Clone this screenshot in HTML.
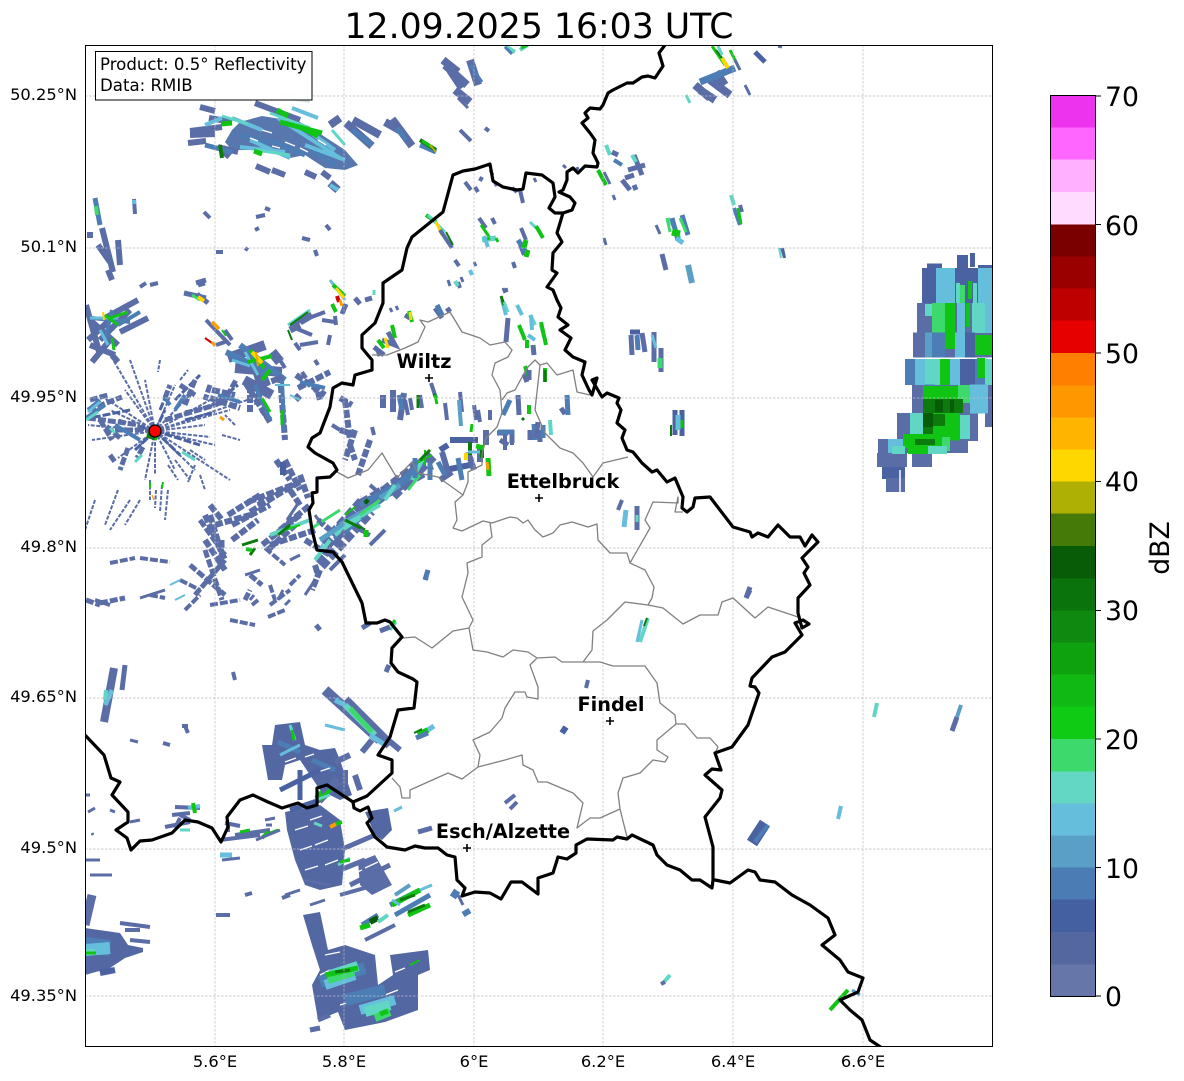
<!DOCTYPE html>
<html><head><meta charset="utf-8"><title>Radar</title>
<style>
html,body{margin:0;padding:0;background:#fff}
svg{display:block;font-family:"DejaVu Sans","Liberation Sans",sans-serif}
.e{fill:none;stroke-linecap:butt}
.b{stroke:#5a6da6}.n{stroke:#4a62a2}.m{stroke:#4c7db5}.s{stroke:#5a9fc6}.l{stroke:#65bedc}.t{stroke:#62d6c4}.g{stroke:#3ed96c}.G{stroke:#10c414}.D{stroke:#0c7a0c}.k{stroke:#085c08}.y{stroke:#ffd700}.o{stroke:#ff9c00}.r{stroke:#d40000}.q{stroke:#aeb004}
.w2{stroke-width:2}.w3{stroke-width:3}.w4{stroke-width:4}.w5{stroke-width:5}.w6{stroke-width:6}.w7{stroke-width:7}.w8{stroke-width:8}.w10{stroke-width:10}.w1{stroke-width:1.3}
.d1{stroke-dasharray:4 1.5}.d2{stroke-dasharray:8 2}
</style></head><body>
<svg width="1184" height="1081" viewBox="0 0 1184 1081" xmlns="http://www.w3.org/2000/svg">
<rect width="1184" height="1081" fill="#fff"/>
<defs><clipPath id="ax"><rect x="85" y="45" width="907" height="1001"/></clipPath></defs>
<g clip-path="url(#ax)">

<!-- top-left cluster -->
<path fill="#5877ae" d="M240 122L262 116L300 122L322 135L345 150L358 165L345 170L325 168L305 155L290 158L270 152L250 150L232 150L225 142L232 130Z"/>
<path class="e b w6" d="M200 107L215 111M209 118L232 122M190 131L222 127M188 143L206 141M190 135L215 134M218 147L238 152M256 166L270 172M272 170L285 175M305 172L316 177M322 172L330 178M255 103L300 120"/>
<path class="e b w8" d="M224 151L230 156M330 125L340 118M346 123L372 146M353 120L380 135M392 119L412 146M385 122L401 131M330 183L338 190"/>
<path class="e m w5" d="M205 145L232 152M240 135L268 143M270 140L305 155M312 150L335 165M352 130L372 145M397 128L406 140M420 145L436 152"/>
<path class="e l w4" d="M205 125L222 118M232 118L262 130M278 118L340 158M250 140L290 158M300 125L335 150M240 147L285 152M305 145L345 160M292 108L318 118M330 185L338 190"/>
<path class="e t w3" d="M222 116L248 124M270 113L310 128M256 150L290 155M332 130L345 145"/>
<path class="e G w5" d="M221 124L232 123M280 122L322 133M254 151L262 154M277 110L288 116M302 128L318 136"/>
<path class="e D w4" d="M220 145L222 158M420 140L436 150"/>
<path class="e G w3" d="M422 141L432 147"/>
<path class="e q w2" d="M430 145L436 152"/>
<path stroke="#fff" stroke-width="1.4" fill="none" d="M262 130L272 133M285 142L295 146M300 148L308 152M250 138L258 141M318 140L326 145M272 146L280 148"/>
<path class="e" stroke="#d6e3e6" stroke-width="6" d="M278 95L310 100"/>
<!-- blue scatter upper -->
<path class="e b w4" d="M134 199L135 214M204 212L210 218M256 217L265 215M255 230L259 228M265 208L270 210M302 238L310 240M315 250L317 256M216 252L223 252M245 248L248 250M471 141L460 130M485 128L489 131M326 225L330 230"/>
<path class="e l w4" d="M134 200L134 204"/>

<!-- left edge column -->
<path class="e m w5" d="M95 198L100 225"/>
<path class="e g w4" d="M96 206L97 215"/>
<path class="e b w6" d="M102 228L113 272M118 240L120 265M98 245L110 262M108 270L112 280M90 232L90 238"/>
<!-- cluster B -->
<path class="e b w6" d="M86 305L100 355M90 320L118 345M88 340L112 318M112 355L118 362M105 318L138 300M120 332L148 318M92 362L110 340M100 340L130 310M90 345L115 355"/>
<path class="e m w4" d="M92 318L130 322M105 340L112 310M118 325L140 312"/>
<path class="e l w3" d="M90 318L118 318M100 330L108 345"/>
<path class="e G w3" d="M110 318L128 312M105 315L118 325M112 338L114 350"/>
<path class="e y w2" d="M103 312L104 320"/>
<path class="e b w4" d="M140 287L146 283M158 283L150 285"/>

<!-- small orange clusters -->
<path class="e b w5" d="M184 293L206 298M198 285L205 283M196 283L206 280M197 294L208 303"/>
<path class="e g w3" d="M192 295L200 300"/>
<path class="e y w4" d="M198 297L204 301"/>
<path class="e b w4" d="M206 320L230 345M216 345L225 342M225 330L232 340"/>
<path class="e o w4" d="M212 322L219 329"/>
<path class="e r w2" d="M205 338L212 343"/>
<path class="e o w3" d="M212 342L215 346"/>
<path class="e G w2" d="M222 330L226 336"/>
<!-- bright cluster -->
<path class="e b w10" d="M228 358L265 345M235 368L282 372M250 350L262 385M244 380L272 395M272 352L280 362"/>
<path class="e b w7" d="M300 322L312 315M300 325L290 330"/>
<path class="e m w6" d="M240 345L285 380M226 352L268 372M258 360L268 385"/>
<path class="e l w3" d="M245 352L258 375M232 360L250 366"/>
<path class="e G w4" d="M250 350L264 368M248 362L272 356M270 370L262 380"/>
<path class="e y w4" d="M252 352L262 363"/>
<path class="e o w2" d="M256 352L258 366"/>
<path class="e b w4" d="M290 325L325 312M295 328L312 335M300 345L318 342M292 322L292 330M330 335L328 345M322 320L335 322M295 343L300 350M315 360L318 365M260 382L256 405M280 360L285 368M335 316L336 325M302 372L306 378M312 384L316 392"/>
<path class="e t w3" d="M288 325L310 310"/>
<path class="e D w2" d="M290 325L308 312M288 330L292 340"/>
<!-- cluster G -->
<path class="e l w3" d="M330 280L345 300"/>
<path class="e G w4" d="M333 285L345 296M332 304L336 312"/>
<path class="e y w3" d="M336 288L344 298"/>
<path class="e r w4" d="M337 296L339 302"/>
<path class="e o w3" d="M340 300L342 306"/>
<path class="e b w5" d="M346 304L342 314M355 298L360 304M365 300L372 298"/>
<path class="e t w3" d="M374 290L374 295"/>
<path class="e b w3" d="M390 308L392 312M396 306L398 310"/>
<!-- Wiltz vicinity -->
<path class="e b w5" d="M382 340L395 345L388 332M374 347L384 355M405 315L410 318M378 350L380 356"/>
<path class="e G w4" d="M378 340L384 348M392 325L395 338M409 311L412 322"/>
<path class="e y w3" d="M385 338L388 348M410 312L411 320"/>
<path class="e b w5" d="M435 308L442 318M447 308L450 312"/>
<path class="e m w5" d="M437 305L442 315"/>

<!-- radar site star -->
<path class="e b w2 d1" d="M155 431L112 358M155 431L130 360M155 431L145 380M155 431L175 385M155 431L190 395M155 431L210 400M155 431L262 395M155 431L230 410M155 431L205 425M155 431L210 437M155 431L215 445M155 431L195 470M155 431L230 480M155 431L175 470M155 431L145 480M155 431L118 458M155 431L92 440M155 431L88 425M155 431L100 395M155 431L125 390M155 431L110 410M155 431L155 475M155 431L135 450M160 360L158 372M190 450L205 460M180 380L188 370"/>
<path class="e n w3 d2" d="M155 431L118 420M155 431L200 445M155 431L165 410M155 431L135 450M155 431L180 455M130 410L90 418M175 400L200 375M185 412L225 403M185 420L215 412M212 405L238 385M160 410L165 398"/>
<path class="e b w5 d2" d="M88 410L122 397M100 420L112 440M90 400L108 395M180 385L195 395M165 398L170 385M195 380L185 405M210 385L205 400M222 405L236 380M128 448L120 470M110 455L115 462M120 438L105 425M143 447L137 458M88 418L140 425M165 420L215 405M115 430L150 430"/>
<path class="e m w4" d="M86 418L105 405M100 400L88 410M165 398L170 405M140 440L115 425M185 395L175 410"/>
<path class="e t w3" d="M86 420L98 412M182 452L195 460M142 455L135 462M115 433L110 428"/>
<path class="e l w3" d="M88 412L100 402"/>
<path class="e G w6" d="M148 432L158 438"/>
<path class="e D w5" d="M147 435L155 438"/>
<path class="e b w2 d1" d="M175 460L190 480M168 465L178 480M195 465L188 482M200 475L205 490M150 480L150 500M156 490L155 508M162 485L160 512M168 490L165 520M140 500L125 525M118 490L105 525M130 500L110 530M95 500L85 530M222 435L240 440M235 425L225 415"/>
<path class="e G w2" d="M150 482L150 488M163 482L162 488"/>
<path class="e o w1" d="M152 495L154 500"/>
<circle cx="155" cy="431" r="6" fill="#ff0000" stroke="#000" stroke-width="1.2"/>

<!-- branches right of bright cluster -->
<path class="e b w6 d2" d="M212 390L235 395M210 398L240 408M215 405L232 392M245 382L270 422M250 385L250 412M280 375L285 440M262 410L270 420M296 375L325 395M298 388L330 372M318 392L320 400M300 400L295 395M340 398L352 405M345 400L350 440M340 430L355 435M350 445L355 460M262 385L280 378"/>
<path class="e m w4" d="M218 395L240 402M255 385L270 420M282 380L284 430M300 382L325 388"/>
<path class="e l w2" d="M275 385L290 385M290 395L300 400"/>
<path class="e G w3" d="M282 410L282 425M262 398L270 412"/>
<path class="e o w3" d="M220 417L224 420"/>
<!-- right side scatter -->
<path class="e b w6" d="M393 390L393 412M404 393L400 420M383 395L383 408"/>
<path class="e m w5" d="M399 395L402 410"/>
<path class="e b w4" d="M410 398L412 410M420 395L422 408M431 383L436 398M445 403L447 420M460 392L462 412M474 405L476 420M478 410L480 422M490 410L490 420M505 435L505 450M512 432L512 445"/>
<path class="e s w4" d="M459 400L461 426"/>
<path class="e D w3" d="M418 395L418 408M436 398L434 394"/>
<path class="e G w3" d="M435 395L437 404M472 424L471 432"/>
<path class="e b w4" d="M332 425L340 430M372 427L374 435M405 400L408 415"/>
<!-- Band -->
<path class="e b" stroke-width="13" stroke-dasharray="9 3" d="M320 565L370 510M325 545L365 500M362 505L425 470M340 530L385 490M375 500L420 465M392 495L432 455"/>
<path class="e b w6 d2" d="M276 460L290 480M285 460L300 490M300 475L308 498M318 520L330 530M290 490L300 505M248 502L300 482M250 512L285 490M300 482L258 505M210 505L222 520M228 515L260 495M232 525L270 505M215 525L250 515M232 540L258 520M300 515L262 545M268 550L295 525M280 530L310 505M205 515L225 560M210 515L222 555M205 540L225 570M270 545L315 530M305 540L330 555M315 565L318 575M355 430L345 460M370 440L358 475M320 570L312 590"/>
<path class="e n w6" d="M283 462L283 475M450 440L478 440M445 470L470 465M440 450L448 445"/>
<path class="e m w6" d="M335 540L380 500M360 505L410 478M395 488L425 460"/>
<path class="e s w5" d="M340 525L375 505M380 498L400 485M320 540L350 520"/>
<path class="e t w4" d="M345 525L380 505M385 500L395 485M412 480L425 455M335 535L360 518M270 535L310 520M315 560L330 540"/>
<path class="e g w3" d="M360 515L380 500M408 490L420 475M312 528L340 510"/>
<path class="e G w2" d="M355 507L345 515M413 465L432 455M425 450L425 465M285 530L300 525"/>
<path class="e D w3" d="M345 520L365 530M420 460L430 450M278 535L290 525M250 555L255 548M242 545L258 540"/>
<path class="e G w4" d="M246 549L252 550"/>
<path class="e b w4" d="M428 458L432 470M370 485L378 492M370 545L385 530M360 530L370 535M335 545L345 530M345 555L330 570"/>
<path class="e k w5" d="M365 500L368 503"/>
<path class="e G w5" d="M366 537L366 530"/>
<!-- near Ettelbruck -->
<path class="e b w6" d="M442 452L448 472M468 452L474 470M480 445L480 462M452 472L440 480M486 430L486 445"/>
<path class="e m w5" d="M415 458L415 478M430 463L430 480M438 462L445 475M458 458L462 480"/>
<path class="e D w4" d="M470 442L470 455M482 445L482 458"/>
<path class="e G w5" d="M488 458L489 476M476 446L484 448"/>
<path class="e o w3" d="M487 462L488 470"/>
<path class="e y w4" d="M466 453L466 460"/>
<path class="e l w3" d="M468 452L480 452"/>
<path class="e b w5" d="M500 440L508 445M497 433L508 433M512 430L512 443"/>
<path class="e b w5" d="M540 430L540 442M506 342L508 318M524 374L527 382M561 408L565 414"/>
<path class="e m w5" d="M503 415L510 400M498 432L514 432M534 424L535 440M567 395L568 415M543 425L543 438"/>
<path class="e G w4" d="M545 368L545 382M527 340L527 348M529 405L529 414M525 366L528 376"/>
<path class="e D w3" d="M545 370L545 382M522 420L524 418"/>
<path class="e t w4" d="M530 315L535 325M541 325L545 340M550 420L551 435"/>
<path class="e b w5" d="M533 345L534 355M529 370L529 380M518 395L519 415M530 430L530 440M538 422L536 438"/>
<path class="e G w4" d="M519 325L525 340M541 322L546 345"/>
<path class="e l w4" d="M502 300L506 315M517 305L522 315M528 335L535 340M531 315L532 330"/>
<path class="e b w5" d="M631 335L632 355M642 333L645 352M654 332L654 362M661 348L661 372"/>
<path class="e m w5" d="M637 335L638 350"/>
<path class="e l w3" d="M652 335L656 348"/>
<path class="e g w5" d="M660 358L660 368"/>
<path class="e n w5" d="M630 332L640 332M675 410L675 435M682 410L682 436"/>
<path class="e l w5" d="M678 415L678 430"/>
<path class="e G w3" d="M682 420L682 428"/>
<path class="e D w2" d="M671 425L671 436"/>
<path class="e l w5" d="M626 510L624 527"/>
<path class="e b w5" d="M637 506L637 530"/>
<path class="e t w3" d="M637 515L637 522"/>
<path class="e b w5" d="M428 570L425 580M750 590L746 598"/>
<path class="e m w4" d="M428 570L426 580"/>
<!-- Lower-left low returns -->
<path class="e b w4 d2" d="M140 558L170 562M110 563L135 558M95 600L110 605M150 595L165 598M180 580L200 590M185 610L200 595M210 605L240 600M230 620L255 625M270 605L290 590M268 617L285 610M290 585L300 575M270 585L275 600M265 548L285 565"/>
<path class="e b w5 d2" d="M86 600L100 605M100 603L125 598M190 565L225 595M195 595L225 560M218 560L225 570M205 550L222 600M222 540L222 570M200 520L225 555M245 600L250 590M250 575L262 585"/>
<path class="e b w3" d="M290 560L300 555M305 595L315 580M287 520L297 505M315 515L322 525M285 605L290 600M278 600L283 590M254 595L250 600M245 575L260 570M140 598L165 590"/>
<path class="e l w2" d="M185 595L175 600M170 585L180 580M323 543L320 550"/>
<!-- Upper-center scattered echoes -->
<path class="e b w8" d="M470 60L478 85M445 65L467 85M462 88L450 70M455 90L470 102M443 60L458 72"/>
<path class="e m w3" d="M470 65L482 82"/>
<path class="e b w3" d="M458 98L468 108M486 128L488 131M490 170L493 175"/>
<path class="e b w4" d="M465 182L471 190M482 177L480 181M475 187L478 192M520 190L523 203M495 182L497 186M517 192L512 188"/>
<path class="e t w4" d="M505 46L515 52M530 43L520 50"/>
<path class="e G w3" d="M521 48L530 44"/>
<path class="e m w3" d="M505 47L512 54"/>
<path class="e G w4" d="M426 215L436 222"/>
<path class="e t w3" d="M428 215L445 232"/>
<path class="e y w3" d="M436 222L442 235"/>
<path class="e b w4" d="M440 230L452 248M455 260L459 266M458 282L460 288"/>
<path class="e D w2" d="M446 232L453 245"/>
<path class="e l w4" d="M470 270L472 275"/>
<path class="e b w3" d="M448 280L450 286M461 277L463 282"/>
<path class="e t w4" d="M455 281L458 286"/>
<path class="e b w4" d="M479 218L486 228M492 218L495 224"/>
<path class="e G w3" d="M481 225L490 238"/>
<path class="e t w5" d="M482 240L496 238"/>
<path class="e G w3" d="M485 240L490 238M496 238L498 242"/>
<path class="e l w4" d="M488 247L484 236"/>
<path class="e b w4" d="M521 228L526 240M520 245L524 255M513 262L515 268"/>
<path class="e m w5" d="M518 240L526 252"/>
<path class="e G w5" d="M526 240L524 248M528 250L526 257"/>
<path class="e t w3" d="M530 222L536 228"/>
<path class="e G w4" d="M536 226L543 238"/>
<path class="e b w3" d="M503 288L505 293M506 288L507 292"/>
<path class="e D w3" d="M501 296L504 305"/>
<path class="e t w3" d="M504 302L508 312"/>
<path class="e b w3" d="M474 262L476 266"/>
<!-- upper right of border -->
<path class="e t w4" d="M606 145L610 155"/>
<path class="e b w5" d="M612 152L618 155M634 155L642 175M628 170L645 165M622 180L630 190M625 178L634 175M634 185L636 190"/>
<path class="e m w4" d="M614 160L622 165"/>
<path class="e G w4" d="M598 170L606 185"/>
<path class="e b w3" d="M604 172L610 184M613 195L615 200M563 165L566 168M577 167L578 170M534 178L536 182"/>
<path class="e t w4" d="M632 155L636 162"/>
<path class="e t w3" d="M686 95L690 103"/>
<path class="e b w8" d="M695 85L710 98M710 80L730 95M716 72L725 85M700 90L715 100"/>
<path class="e m w7" d="M700 82L735 68"/>
<path class="e n w5" d="M755 52L765 62"/>
<path class="e b w3" d="M745 85L750 95M778 46L782 47"/>
<path class="e G w3" d="M712 46L725 65M730 50L740 70"/>
<path class="e D w2" d="M716 50L725 62"/>
<path class="e y w4" d="M722 58L728 68"/>
<path class="e t w3" d="M718 46L722 55"/>
<path class="e b w3" d="M735 60L740 70"/>
<!-- 6.3E -->
<path class="e b w3" d="M656 225L660 234"/>
<path class="e t w3" d="M668 218L680 238"/>
<path class="e m w5" d="M672 218L678 240M682 215L688 235"/>
<path class="e G w7" d="M672 232L680 234"/>
<path class="e g w3" d="M667 218L670 232M680 218L686 232"/>
<path class="e l w5" d="M676 238L683 243"/>
<path class="e b w5" d="M662 254L666 270"/>
<path class="e s w6" d="M688 265L692 283"/>
<path class="e t w4" d="M731 195L734 205"/>
<path class="e b w4" d="M740 205L742 212"/>
<path class="e m w4" d="M734 208L740 225"/>
<path class="e G w3" d="M738 208L741 224"/>
<path class="e b w2" d="M781 248L784 258"/>
<path class="e t w2" d="M779 248L781 258"/>
<path class="e n w2" d="M783 248L785 258"/>
<path class="e b w3" d="M604 238L606 245"/>

<!-- Right big storm (strips) -->
<path class="e n w8" stroke-width="15" d="M927 267.5H942"/>
<path class="e n" stroke-width="13" d="M957 261.5H968"/>
<path class="e n" stroke-width="14" d="M970 260H975M978 272H992"/>
<path class="e n" stroke-width="36" d="M922 286H992"/>
<path class="e b" stroke-width="30" d="M917 318H992"/>
<path class="e b" stroke-width="25" d="M913 345H992"/>
<path class="e m" stroke-width="26" d="M905 372H992"/>
<path class="e b" stroke-width="29" d="M912 399H992"/>
<path class="e b" stroke-width="28" d="M897 427H978"/>
<path class="e b" stroke-width="14" d="M878 446H968M985 420H992"/>
<path class="e b" stroke-width="14" d="M877 460H907M912 460H932"/>
<path class="e n" stroke-width="12" d="M882 473H905"/>
<path class="e b" stroke-width="14" d="M886 485H905"/>
<!-- row1 -->
<path class="e l" stroke-width="36" d="M936 286H955M978 286H992"/>
<path class="e g" stroke-width="18" d="M960 294H965"/>
<path class="e G" stroke-width="18" d="M968 290H972"/>
<path class="e t" stroke-width="20" d="M956 293H960M973 293H977"/>
<!-- row2 -->
<path class="e t" stroke-width="12" d="M925 310H932"/>
<path class="e g" stroke-width="30" d="M932 318H945"/>
<path class="e G" stroke-width="30" d="M945 318H955"/>
<path class="e l" stroke-width="30" d="M957 318H965"/>
<path class="e G" stroke-width="24" d="M966 315H970"/>
<path class="e t" stroke-width="30" d="M972 318H985"/>
<path class="e l" stroke-width="30" d="M985 318H992"/>
<!-- row3 -->
<path class="e s" stroke-width="25" d="M925 345H932"/>
<path class="e m" stroke-width="25" d="M932 345H945"/>
<path class="e G" stroke-width="18" d="M945 340H955"/>
<path class="e l" stroke-width="25" d="M955 345H965"/>
<path class="e n" stroke-width="25" d="M965 345H975"/>
<path class="e G" stroke-width="20" d="M975 345H992"/>
<!-- row4 -->
<path class="e l" stroke-width="26" d="M915 372H925"/>
<path class="e t" stroke-width="26" d="M925 372H940"/>
<path class="e G" stroke-width="26" d="M940 372H950"/>
<path class="e l" stroke-width="26" d="M950 372H960"/>
<path class="e n" stroke-width="26" d="M960 372H975"/>
<path class="e G" stroke-width="20" d="M977 368H985"/>
<path class="e t" stroke-width="26" d="M985 372H992"/>
<!-- row5 -->
<path class="e m" stroke-width="29" d="M925 399H935"/>
<path class="e G" stroke-width="28" d="M923 400H958"/>
<path class="e g" stroke-width="18" d="M958 394H970"/>
<path class="e l" stroke-width="29" d="M970 399H988"/>
<path class="e D" stroke-width="14" d="M923 406H963"/>
<path class="e k" stroke-width="13" d="M935 406H943M950 406H954"/>
<!-- row6 -->
<path class="e t" stroke-width="28" d="M910 427H923"/>
<path class="e k" stroke-width="14" d="M923 420H933"/>
<path class="e D" stroke-width="14" d="M923 434H942"/>
<path class="e G" stroke-width="27" d="M933 427H960"/>
<path class="e D" stroke-width="12" d="M933 420H945"/>
<path class="e t" stroke-width="24" d="M960 427H970"/>
<!-- row7 -->
<path class="e l" stroke-width="14" d="M888 446H903"/>
<path class="e G" stroke-width="14" d="M903 441H942"/>
<path class="e D" stroke-width="6" d="M915 442H935"/>
<path class="e g" stroke-width="14" d="M942 444H950"/>
<path class="e t" stroke-width="8" d="M892 450H905"/>
<path class="e G" stroke-width="8" d="M908 450H928"/>
<path class="e t" stroke-width="8" d="M928 450H947"/>
<path stroke="#fff" stroke-width="1.5" d="M936 262V0M900 470V500M910 455V500M935 455V480" fill="none"/>

<!-- right single echoes -->
<path class="e" stroke="#62d6c4" stroke-width="4" d="M877 703L874 717"/>
<path class="e s w4" d="M961 705L957 717"/>
<path class="e b w5" d="M957 717L952 731"/>
<path class="e l w4" d="M841 806L838 819"/>
<path class="e n" stroke-width="12" d="M765 823L752 843"/>
<path class="e m w4" d="M768 825L755 842"/>
<path class="e b w5" d="M750 587L746 598"/>
<path class="e b w4" d="M622 500L618 510"/>
<path class="e t w4" d="M648 618L640 642"/>
<path class="e l w3" d="M642 620L637 642"/>
<path class="e D w2" d="M647 618L644 626"/>
<path class="e b w4" d="M588 680L586 688"/>
<path class="e n w6" d="M566 727L562 733"/>
<path class="e t w4" d="M670 975L664 982"/>
<path class="e b w4" d="M665 982L661 984"/>
<path class="e G w4" d="M830 1010L848 990"/>
<path class="e s w3" d="M852 990L860 995"/>
<path class="e b w4" d="M515 795L505 803M517 802L510 809"/>
<path class="e l w3" d="M402 807L394 811"/>
<path class="e b w5" d="M432 828L418 832M389 665L386 672"/>
<path class="e t w3" d="M396 622L390 630"/>
<path class="e G w3" d="M395 620L391 626"/>
<path class="e b w5" d="M390 627L380 631M370 623L362 628M320 630L316 625"/>
<path class="e b w4" d="M258 600L252 605"/>
<path class="e G w6" d="M418 735L428 730"/>
<path class="e l w5" d="M428 730L434 726"/>
<path class="e m w5" d="M416 738L428 733"/>
<path class="e D w2" d="M414 733L422 729"/>

<!-- left cluster mid bottom -->
<path class="e b w8" d="M114 668L104 722"/>
<path class="e b w5" d="M125 665L122 690"/>
<path class="e l w5" d="M112 690L105 705"/>
<path class="e t w4" d="M106 690L105 700"/>
<path class="e b w4" d="M185 726L188 733M163 743L170 745M233 672L235 680M182 726L188 726"/>
<path class="e b w3" d="M130 740L138 742"/>
<!-- south lumps -->
<path fill="#5367a2" d="M275 725L300 722L305 745L320 750L335 748L340 760L345 775L352 795L340 800L320 790L310 775L300 760L285 765L282 780L268 780L262 745L272 745Z"/>
<path class="e b" stroke-width="10" d="M325 690L380 740M345 700L390 745"/>
<path class="e b w6" d="M362 752L372 740M360 790L355 775M388 740L400 750M345 770L345 785M335 762L350 755"/>
<path class="e t" stroke-width="6" d="M345 705L375 735"/>
<path class="e g" stroke-width="5" d="M350 708L372 732"/>
<path class="e l" stroke-width="5" d="M335 700L345 705M370 735L385 745"/>
<path class="e m w5" d="M278 742L300 752M312 760L335 770"/>
<path class="e t w3" d="M290 725L295 740"/>
<path class="e G w3" d="M292 730L294 740"/>
<path class="e l w3" d="M280 755L300 745M325 725L345 730"/>
<path stroke="#fff" stroke-width="1.3" fill="none" d="M285 762L296 758M318 772L330 768M305 757L314 754M326 785L338 780"/>
<path fill="#5367a2" d="M285 812L320 805L340 820L345 850L342 885L320 890L305 885L295 860L287 830Z"/>
<path fill="#5367a2" d="M365 812L388 808L392 830L382 840L375 835Z"/>
<path fill="#5a6da6" d="M358 862L375 855L392 885L372 895L360 885Z"/>
<path class="e n w5" d="M280 790L320 770M290 810L320 800M300 770L300 800"/>
<path class="e b w10" d="M318 800L338 780"/>
<path class="e b w5" d="M340 850L375 835M340 870L365 860M350 885L370 875M360 880L390 865"/>
<path stroke="#fff" stroke-width="1.3" fill="none" d="M295 830L308 826M315 845L328 840M300 850L312 846M325 865L338 860M305 870L318 866M310 820L322 816M350 875L362 870M365 868L378 862"/>
<path class="e G w6" d="M318 792L322 800"/>
<path class="e G w4" d="M323 797L330 790"/>
<path class="e t w3" d="M315 800L330 795"/>
<path class="e o w4" d="M330 827L336 824"/>
<path class="e G w4" d="M336 824L342 822"/>
<path class="e t w3" d="M314 823L322 826"/>
<path class="e t w3" d="M338 865L350 858"/>
<path class="e G w3" d="M340 862L350 860"/>
<path class="e b w3" d="M285 895L300 890M305 880L330 885M310 905L325 900"/>
<!-- left small stuff -->
<path class="e b w4" d="M175 807L200 808M172 815L190 813M190 820L180 815M165 827L190 822M180 818L175 828"/>
<path class="e l w4" d="M188 808L200 806"/>
<path class="e G w4" d="M193 803L195 813"/>
<path class="e t w3" d="M180 830L190 830"/>
<path class="e b w3" d="M110 810L115 812M92 833L93 835M140 820L130 822M95 808L88 812M85 795L90 795"/>
<path class="e b w4" d="M225 823L240 826M235 835L270 830M220 840L260 835M228 825L228 832"/>
<path class="e G w3" d="M240 832L250 830M265 835L278 830"/>
<path class="e G w4" d="M262 838L268 832"/>
<path class="e b w3" d="M265 820L275 818M266 825L272 825M256 840L280 830"/>
<path class="e l w5" d="M220 855L232 855"/>
<path class="e b w3" d="M222 860L240 858"/>
<path class="e b w4" d="M216 915L230 915M245 895L252 893M290 895L282 898"/>
<path class="e b w3" d="M85 860L100 860M112 875L90 875"/>
<path class="e b" stroke-width="9" d="M92 895L85 925"/>
<!-- west lower-left -->
<path fill="#5367a2" d="M85 928L120 933L128 945L143 948L143 952L125 958L110 968L85 975Z"/>
<path class="e b w4" d="M120 923L150 927M125 930L140 930M130 940L150 942"/>
<path class="e m" stroke-width="16" d="M85 945L110 948"/>
<path class="e l" stroke-width="12" d="M85 950L110 948"/>
<path class="e t" stroke-width="6" d="M85 952L95 952"/>
<path class="e G w3" d="M85 953L96 953"/>
<path class="e n w6" d="M100 973L115 970"/>
<!-- bottom -->
<path fill="#5367a2" d="M303 915L320 912L328 950L345 945L375 955L378 985L393 975L390 955L428 950L430 970L418 975L418 1010L385 1022L345 1030L338 1012L318 1020L312 985L320 970L312 945Z"/>
<path class="e b w5" d="M318 1020L330 1015M310 1030L320 1028"/>
<path stroke="#fff" stroke-width="1.3" fill="none" d="M325 955L340 952M360 1010L375 1005M385 995L398 990M340 1005L350 1002M395 972L405 968M320 975L330 970"/>
<path class="e m" stroke-width="12" d="M320 982L365 968M345 1000L385 990"/>
<path class="e l" stroke-width="10" d="M325 985L355 975M360 1010L395 1000"/>
<path class="e t" stroke-width="10" d="M330 975L358 966M365 1012L390 1005"/>
<path class="e g" stroke-width="8" d="M328 980L354 972M375 1018L390 1012"/>
<path class="e G w5" d="M325 975L358 968M380 1014L388 1011"/>
<path class="e D w3" d="M335 972L350 970"/>
<path class="e G w2" d="M410 965L420 960"/>
<!-- Grid around 5.85 49.42 -->
<path class="e m w5" d="M362 925L378 915M390 905L420 890M395 915L430 895"/>
<path class="e b w4" d="M340 895L375 885M365 940L395 925"/>
<path class="e G w5" d="M392 905L420 890M408 915L430 905"/>
<path class="e D w3" d="M400 900L415 895M408 912L425 905"/>
<path class="e k w6" d="M370 922L378 918"/>
<path class="e G w5" d="M360 928L370 925"/>
<path class="e t w4" d="M378 922L388 915"/>
<path class="e s w4" d="M395 895L410 885"/>
<path class="e l w3" d="M420 890L432 885M400 905L392 900"/>
<path class="e m" stroke-width="8" d="M452 892L458 896M465 910L468 915"/>
<path class="e b w3" d="M458 895L463 905"/>

<!-- grid lines -->
<path d="M215 45V1046M344 45V1046M474 45V1046M603 45V1046M733 45V1046M863 45V1046M85 96H992M85 248H992M85 398H992M85 548H992M85 698H992M85 849H992M85 996H992" stroke="#bcbcbc" stroke-width=".7" stroke-dasharray="2.5 1.5" fill="none"/>

<!-- canton borders -->
<path fill="none" stroke="#808080" stroke-width="1.3" stroke-linejoin="round" d="M372 355L387 355L405 348L418 342L425 327L420 320L428 322L450 312L462 332L480 338L490 345L505 342L512 350L508 357L495 363L492 375L500 390L502 413L497 427L486 438L482 455L482 465L468 472L468 482L463 495L455 502L457 520L453 528L462 531L483 521L492 523L510 517L517 518L523 523L528 520L535 530L543 537L553 533L560 525L572 522L588 527L597 524L598 540L610 553L627 553L630 563L645 570L654 587L652 598L648 605L625 602L607 620L593 631L592 650L583 662L562 662L555 657L537 658L528 652L513 650L503 657L487 652L473 650L469 628L453 631L432 648L415 637L403 638M469 628L473 620L462 597L468 573L467 563L482 557L482 545L492 537L490 523M537 658L530 665L538 687L538 699L527 697L525 692L515 692L505 708L502 718L490 732L473 740L480 755L478 767L505 760L522 755L523 765L533 770L538 782L547 782L573 793L583 803L577 828L590 818L600 818L620 809L627 837M620 809L618 793L623 778L640 773L653 760L665 762L668 757L657 750L657 740L676 724L675 715L660 703L657 683L645 666L613 666L600 662L583 662M676 724L685 724L697 738L710 738L718 747L715 753M648 605L663 608L683 624L700 615L718 615L722 602L733 598L755 618L768 607L798 617M478 767L462 779L448 773L410 790L410 798L402 798L400 787L392 778M502 400L507 393L515 390L527 368L535 360L540 365L535 410L545 433L560 448L573 453L583 463L593 477L603 463L628 457M540 365L547 363L557 375L573 370L577 392L590 395M630 563L650 528L645 520L653 502L678 503L678 497L675 512L683 512M337 472L348 478L368 470L382 453L397 478L407 467L412 462L418 473L438 477L463 495"/>

<!-- national border -->
<path fill="none" stroke="#000" stroke-width="3.2" stroke-linejoin="round" d="M665 45L659 53L663 66L655 78L648 76L642 77L633 83L627 83L613 90L608 93L603 105L600 109L590 108L585 113L588 118L582 123L590 133L595 140L593 153L598 163L597 167L585 166L578 173L573 168L567 172L567 180L563 190L559 192L570 197L575 203L572 210L563 213L555 213L549 208L555 197L553 183L542 175L526 173L523 189L517 190L503 187L493 181L490 164L475 169L463 171L453 175L443 212L412 237L407 248L402 270L383 283L383 303L375 323L362 335L362 348L372 360L372 370L355 375L353 385L342 383L333 388L330 407L320 433L312 438L308 447L315 453L333 463L337 470L330 477L317 478L317 492L312 493L313 503L309 510L312 530L317 550L333 552L342 562L362 603L366 623L377 623L385 620L390 622L402 637L392 648L391 663L398 672L413 679L417 682L414 708L398 710L390 737L378 755L392 760L392 773L367 796L353 802L327 785L317 788L317 805L307 808L298 803L282 808L268 802L253 795L240 800L227 817L228 827L221 842L212 828L198 822L185 820L172 833L152 840L140 841L131 850L127 838L116 830L128 822L128 812L112 795L120 782L111 778L104 755L85 735M353 802L354 808L360 811L368 807L372 818L367 823L375 837L387 847L405 850L415 846L425 848L438 848L447 855L455 857L457 880L465 888L462 896L475 892L490 893L501 899L511 882L522 882L538 894L538 878L553 873L558 857L567 859L576 853L576 845L587 839L613 840L617 837L627 839L632 835L653 845L657 855L667 865L680 870L692 880L700 880L712 888L713 880L713 847L705 817L720 798L722 790L705 775L712 769L721 770L715 753L732 747L748 725L759 693L755 687L750 686L752 678L772 657L785 652L802 635L795 623L803 620L809 624L802 628L798 613L798 598L810 585L804 573L808 567L802 558L818 542L812 535L805 546L800 537L790 537L778 525L768 537L758 533L752 537L750 532L733 527L710 497L695 498L693 507L687 512L682 508L683 497L675 478L667 482L657 470L652 472L642 463L633 452L627 450L622 438L625 430L617 423L621 410L617 403L619 398L607 393L602 397L592 380L597 378L592 395L589 390L582 375L585 362L573 357L565 350L571 338L560 330L568 325L558 317L561 308L557 300L553 290L547 287L557 273L552 270L553 253L562 242L557 233L563 213M713 880L715 880L730 883L748 870L755 872L760 880L775 882L792 895L810 905L828 918L835 935L822 945L840 960L848 972L863 978L858 992L840 1000L850 1010L862 1020L870 1040L882 1048"/>
</g>

<!-- site labels -->
<g font-weight="bold" font-size="19.3" text-anchor="middle" fill="#000">
<text x="424" y="368">Wiltz</text>
<text x="563" y="488">Ettelbruck</text>
<text x="611" y="711">Findel</text>
<text x="503" y="838">Esch/Alzette</text>
</g>
<path d="M425 378H433M429 374V382M535 498H543M539 494V502M606 721H614M610 717V725M463 848H471M467 844V852" stroke="#000" stroke-width="1.6" fill="none"/>

<!-- axes frame -->
<rect x="85.5" y="45.5" width="907" height="1001" fill="none" stroke="#000" stroke-width="1"/>

<!-- product box -->
<rect x="95.5" y="51.5" width="216.5" height="48.5" fill="#fff" fill-opacity=".95" stroke="#000" stroke-width="1"/>
<text x="100" y="70" font-size="16.6">Product: 0.5° Reflectivity</text>
<text x="100" y="91" font-size="16.6">Data: RMIB</text>

<!-- title -->
<text x="539" y="38" font-size="34.67" text-anchor="middle">12.09.2025 16:03 UTC</text>

<!-- lat/lon labels -->
<g font-size="16.3" text-anchor="end">
<text x="77" y="100">50.25°N</text>
<text x="77" y="252">50.1°N</text>
<text x="77" y="402">49.95°N</text>
<text x="77" y="552">49.8°N</text>
<text x="77" y="702">49.65°N</text>
<text x="77" y="853">49.5°N</text>
<text x="77" y="1001">49.35°N</text>
</g>
<g font-size="16.3" text-anchor="middle">
<text x="215" y="1067">5.6°E</text>
<text x="344" y="1067">5.8°E</text>
<text x="474" y="1067">6°E</text>
<text x="603" y="1067">6.2°E</text>
<text x="733" y="1067">6.4°E</text>
<text x="863" y="1067">6.6°E</text>
</g>

<!-- colorbar -->
<g shape-rendering="crispEdges">
<rect x="1051" y="964" width="44" height="32.5" fill="#6676a9"/>
<rect x="1051" y="932" width="44" height="32.5" fill="#54689f"/>
<rect x="1051" y="899" width="44" height="33" fill="#4460a1"/>
<rect x="1051" y="867" width="44" height="32.5" fill="#4b7cb3"/>
<rect x="1051" y="835" width="44" height="32.5" fill="#5a9fc6"/>
<rect x="1051" y="803" width="44" height="32.5" fill="#65bfdc"/>
<rect x="1051" y="771" width="44" height="32.5" fill="#63d6c4"/>
<rect x="1051" y="739" width="44" height="32.5" fill="#3ed96c"/>
<rect x="1051" y="706" width="44" height="33" fill="#10cb14"/>
<rect x="1051" y="674" width="44" height="32.5" fill="#10b913"/>
<rect x="1051" y="642" width="44" height="32.5" fill="#0fa20f"/>
<rect x="1051" y="610" width="44" height="32.5" fill="#0f890f"/>
<rect x="1051" y="578" width="44" height="32.5" fill="#0b730b"/>
<rect x="1051" y="546" width="44" height="32.5" fill="#085c08"/>
<rect x="1051" y="513" width="44" height="33" fill="#467a08"/>
<rect x="1051" y="481" width="44" height="32.5" fill="#aeb004"/>
<rect x="1051" y="449" width="44" height="32.5" fill="#ffd700"/>
<rect x="1051" y="417" width="44" height="32.5" fill="#ffb400"/>
<rect x="1051" y="385" width="44" height="32.5" fill="#ff9800"/>
<rect x="1051" y="353" width="44" height="32.5" fill="#ff7f00"/>
<rect x="1051" y="320" width="44" height="33" fill="#e60000"/>
<rect x="1051" y="288" width="44" height="32.5" fill="#bf0000"/>
<rect x="1051" y="256" width="44" height="32.5" fill="#9b0000"/>
<rect x="1051" y="224" width="44" height="32.5" fill="#7a0000"/>
<rect x="1051" y="192" width="44" height="32.5" fill="#ffdcff"/>
<rect x="1051" y="159" width="44" height="33" fill="#ffb0ff"/>
<rect x="1051" y="127" width="44" height="32.5" fill="#ff66ff"/>
<rect x="1051" y="96" width="44" height="31.5" fill="#ee33ee"/>
</g>
<rect x="1050.5" y="95.5" width="45" height="901" fill="none" stroke="#000" stroke-width="1"/>
<path d="M1095 96H1101M1095 224.5H1101M1095 353H1101M1095 481.5H1101M1095 610.5H1101M1095 739H1101M1095 867.5H1101M1095 996H1101" stroke="#000" stroke-width="1" fill="none"/>
<g font-size="26.67">
<text x="1105" y="106">70</text>
<text x="1105" y="235">60</text>
<text x="1105" y="363">50</text>
<text x="1105" y="491">40</text>
<text x="1105" y="620">30</text>
<text x="1105" y="749">20</text>
<text x="1105" y="878">10</text>
<text x="1105" y="1006">0</text>
</g>
<text transform="translate(1169 548) rotate(-90)" font-size="26.67" text-anchor="middle">dBZ</text>
</svg>
</body></html>
